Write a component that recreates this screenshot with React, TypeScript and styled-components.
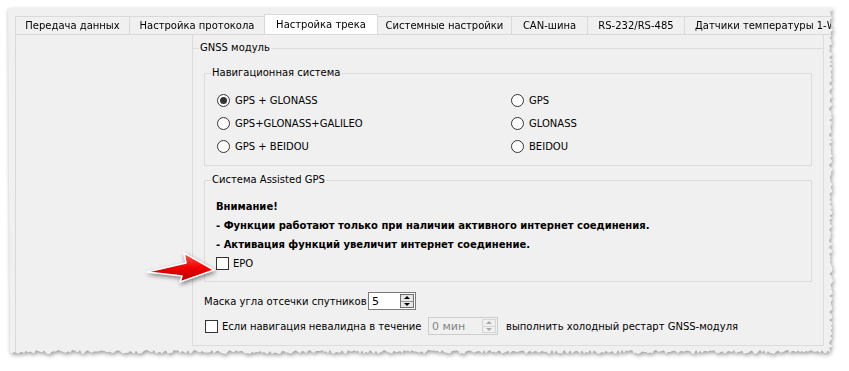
import React from 'react';
import styled, { createGlobalStyle } from 'styled-components';

const GlobalStyle = createGlobalStyle`
  html, body {
    margin: 0;
    padding: 0;
    background: #ffffff;
  }
  body {
    font-family: "DejaVu Sans", Verdana, sans-serif;
    font-size: 10px;
    color: #000000;
  }
`;

// рваный край скриншота справа и снизу
const rnd = (i: number) => {
  const v = Math.sin(i * 12.9898 + 78.233) * 43758.5453;
  return v - Math.floor(v);
};

const tornClip = (w: number, h: number) => {
  const pts: string[] = ['0px 0px', `${w - 2}px 0px`];
  for (let y = 2, i = 0; y < h - 4; y += 2, i++) {
    pts.push(`${(w - 1 - rnd(i) * 4).toFixed(1)}px ${y}px`);
  }
  for (let x = w - 4, i = 0; x > 0; x -= 2, i++) {
    pts.push(`${x}px ${(h - 1 - rnd(i + 500) * 4).toFixed(1)}px`);
  }
  pts.push('0px 0px');
  return `polygon(${pts.join(', ')})`;
};

const Page = styled.div`
  width: 849px;
  height: 371px;
  padding: 8px;
  box-sizing: border-box;
  background: #ffffff;
`;

const Shot = styled.div`
  position: relative;
  width: 826px;
  height: 347px;
  filter: drop-shadow(1px 2px 2px rgba(0, 0, 0, 0.4));
`;

const Window = styled.div<{ $clip: string }>`
  width: 100%;
  height: 100%;
  background: #f0f0f0;
  clip-path: ${({ $clip }) => $clip};
  display: flex;
  flex-direction: column;
`;

const TabBar = styled.div`
  display: flex;
  align-items: flex-end;
  height: 26px;
  padding-left: 7px;
  flex-shrink: 0;
  overflow: hidden;
`;

const Tab = styled.div<{ $w: number; $active?: boolean }>`
  width: ${({ $w }) => $w}px;
  height: ${({ $active }) => ($active ? 21 : 18)}px;
  margin-right: -1px;
  margin-bottom: ${({ $active }) => ($active ? -1 : 0)}px;
  box-sizing: border-box;
  flex-shrink: 0;
  border: 1px solid #d9d9d9;
  border-bottom: none;
  background: ${({ $active }) => ($active ? '#ffffff' : '#f0f0f0')};
  position: relative;
  z-index: ${({ $active }) => ($active ? 2 : 1)};
  display: flex;
  align-items: center;
  justify-content: ${({ $w }) => ($w > 150 ? 'flex-start' : 'center')};
  padding-left: ${({ $w }) => ($w > 150 ? 10 : 0)}px;
  padding-bottom: ${({ $active }) => ($active ? 2 : 0)}px;
  white-space: nowrap;
  overflow: hidden;
`;

const Pane = styled.div`
  flex: 1;
  margin-left: 7px;
  border-top: 1px solid #d9d9d9;
  border-left: 1px solid #d9d9d9;
  display: flex;
  align-items: flex-start;
`;

const SidePanel = styled.div`
  width: 176px;
  flex-shrink: 0;
`;

const ScrollArea = styled.div`
  width: 632px;
  height: 311px;
  box-sizing: border-box;
  border: 1px solid #dcdcdc;
  border-top: none;
  display: flex;
  flex-direction: column;
`;

const Group = styled.fieldset<{ $flat?: boolean; $top: number }>`
  margin: ${({ $top }) => $top}px 0 0;
  padding: 0;
  min-width: 0;
  border: 1px solid #dcdcdc;
  ${({ $flat }) => ($flat ? 'border-left: none; border-right: none; border-bottom: none;' : '')}
`;

const Caption = styled.legend<{ $left: number }>`
  margin-left: ${({ $left }) => $left}px;
  padding: 0 1px;
  line-height: 14px;
`;

const GnssBody = styled.div`
  padding: 0 11px;
  display: flex;
  flex-direction: column;
`;

const RadioGrid = styled.div`
  display: grid;
  grid-template-columns: 294px 1fr;
  grid-auto-rows: 23px;
  padding: 9px 0 7px 12px;
`;

const Option = styled.label`
  display: flex;
  align-items: center;
  gap: 5px;
  white-space: nowrap;
`;

const Radio = styled.span<{ $on?: boolean }>`
  width: 13px;
  height: 13px;
  box-sizing: border-box;
  border-radius: 50%;
  border: 1px solid #333333;
  background: #ffffff;
  display: flex;
  align-items: center;
  justify-content: center;

  &::after {
    content: '';
    width: 7px;
    height: 7px;
    border-radius: 50%;
    background: #333333;
    display: ${({ $on }) => ($on ? 'block' : 'none')};
  }
`;

const Box = styled.span<{ $shift?: number }>`
  width: 13px;
  height: 13px;
  margin-left: ${({ $shift }) => $shift ?? 0}px;
  box-sizing: border-box;
  border: 1px solid #333333;
  background: #ffffff;
  flex-shrink: 0;
`;

const AgpsBody = styled.div`
  padding: 10px 0 8px 11px;
  display: flex;
  flex-direction: column;
`;

const Line = styled.div<{ $bold?: boolean }>`
  height: 19px;
  display: flex;
  align-items: center;
  gap: 4px;
  font-weight: ${({ $bold }) => ($bold ? 700 : 400)};
  white-space: nowrap;
`;

const FormRow = styled.div<{ $top: number }>`
  height: 18px;
  margin-top: ${({ $top }) => $top}px;
  display: flex;
  align-items: center;
  white-space: nowrap;
`;

const FieldLabel = styled.span<{ $w: number; $pad?: number }>`
  width: ${({ $w }) => $w}px;
  padding-left: ${({ $pad }) => $pad ?? 0}px;
  flex-shrink: 0;
`;

const Tail = styled.span`
  margin-left: 8px;
`;

const Spin = styled.div<{ $w: number; $off?: boolean }>`
  width: ${({ $w }) => $w}px;
  height: 18px;
  box-sizing: border-box;
  border: 1px solid ${({ $off }) => ($off ? '#cccccc' : '#7a7a7a')};
  background: ${({ $off }) => ($off ? '#f0f0f0' : '#ffffff')};
  color: ${({ $off }) => ($off ? '#838383' : '#000000')};
  display: flex;
  flex-shrink: 0;
`;

const SpinValue = styled.span`
  flex: 1;
  padding-left: 3px;
  display: flex;
  align-items: center;
  font-size: 11px;
`;

const SpinButtons = styled.div<{ $off?: boolean }>`
  width: 14px;
  margin: 1px 1px 1px 0;
  box-sizing: border-box;
  border: 1px solid ${({ $off }) => ($off ? '#d5d5d5' : '#6f6f6f')};
  background: ${({ $off }) => ($off ? '#f0f0f0' : '#e6e6e6')};
  display: flex;
  flex-direction: column;
`;

const SpinButton = styled.span<{ $off?: boolean; $first?: boolean }>`
  flex: 1;
  display: flex;
  align-items: center;
  justify-content: center;
  border-bottom: ${({ $first, $off }) => ($first ? `1px solid ${$off ? '#d5d5d5' : '#9a9a9a'}` : 'none')};
`;

const Tri = styled.span<{ $up?: boolean; $off?: boolean }>`
  width: 0;
  height: 0;
  border-left: 3px solid transparent;
  border-right: 3px solid transparent;
  ${({ $up, $off }) =>
    `${$up ? 'border-bottom' : 'border-top'}: 3px solid ${$off ? '#a8a8a8' : '#000000'};`}
`;

const Arrow = styled.svg`
  position: absolute;
  left: 134px;
  top: 232px;
  filter: drop-shadow(1px 2px 2px rgba(0, 0, 0, 0.45));
`;

const tabs = [
  { title: 'Передача данных', w: 115 },
  { title: 'Настройка протокола', w: 136 },
  { title: 'Настройка трека', w: 114, active: true },
  { title: 'Системные настройки', w: 135 },
  { title: 'CAN-шина', w: 77 },
  { title: 'RS-232/RS-485', w: 98 },
  { title: 'Датчики температуры 1-Wire', w: 170 },
];

const systems = [
  { label: 'GPS + GLONASS', on: true },
  { label: 'GPS' },
  { label: 'GPS+GLONASS+GALILEO' },
  { label: 'GLONASS' },
  { label: 'GPS + BEIDOU' },
  { label: 'BEIDOU' },
];

const SpinBox: React.FC<{ value: string; w: number; off?: boolean }> = ({ value, w, off }) => (
  <Spin $w={w} $off={off}>
    <SpinValue>{value}</SpinValue>
    <SpinButtons $off={off}>
      <SpinButton $first $off={off}>
        <Tri $up $off={off} />
      </SpinButton>
      <SpinButton $off={off}>
        <Tri $off={off} />
      </SpinButton>
    </SpinButtons>
  </Spin>
);

const App: React.FC = () => {
  const clip = tornClip(826, 347);

  return (
    <Page>
      <GlobalStyle />
      <Shot>
        <Window $clip={clip}>
          <TabBar>
            {tabs.map((t) => (
              <Tab key={t.title} $w={t.w} $active={t.active}>
                {t.title}
              </Tab>
            ))}
          </TabBar>

          <Pane>
            <SidePanel />
            <ScrollArea>
              <Group $flat $top={6}>
                <Caption $left={6}>GNSS модуль</Caption>
                <GnssBody>
                  <Group $top={11}>
                    <Caption $left={6}>Навигационная система</Caption>
                    <RadioGrid>
                      {systems.map((s) => (
                        <Option key={s.label}>
                          <Radio $on={s.on} />
                          {s.label}
                        </Option>
                      ))}
                    </RadioGrid>
                  </Group>

                  <Group $top={7}>
                    <Caption $left={6}>Система Assisted GPS</Caption>
                    <AgpsBody>
                      <Line $bold>Внимание!</Line>
                      <Line $bold>- Функции работают только при наличии активного интернет соединения.</Line>
                      <Line $bold>- Активация функций увеличит интернет соединение.</Line>
                      <Line>
                        <Box />
                        EPO
                      </Line>
                    </AgpsBody>
                  </Group>
                </GnssBody>

                <GnssBody>
                  <FormRow $top={10}>
                    <FieldLabel $w={164}>Маска угла отсечки спутников</FieldLabel>
                    <SpinBox value="5" w={48} />
                  </FormRow>
                  <FormRow $top={7}>
                    <Box $shift={1} />
                    <FieldLabel $w={206} $pad={4}>
                      Если навигация невалидна в течение
                    </FieldLabel>
                    <SpinBox value="0 мин" w={70} off />
                    <Tail>выполнить холодный рестарт GNSS-модуля</Tail>
                  </FormRow>
                </GnssBody>
              </Group>
            </ScrollArea>
          </Pane>
        </Window>

        <Arrow width="80" height="48" viewBox="0 0 80 48">
          <defs>
            <linearGradient id="arrowFill" x1="0" y1="0" x2="0" y2="1">
              <stop offset="0" stopColor="#ff5a5a" />
              <stop offset="0.5" stopColor="#f00000" />
              <stop offset="1" stopColor="#b80000" />
            </linearGradient>
          </defs>
          <path
            d="M5 32 L44 23 L42 13 L72 30 L38 42 L40 36 Z"
            fill="url(#arrowFill)"
            stroke="#ffffff"
            strokeWidth="1.6"
            strokeLinejoin="round"
          />
        </Arrow>
      </Shot>
    </Page>
  );
};

export default App;
